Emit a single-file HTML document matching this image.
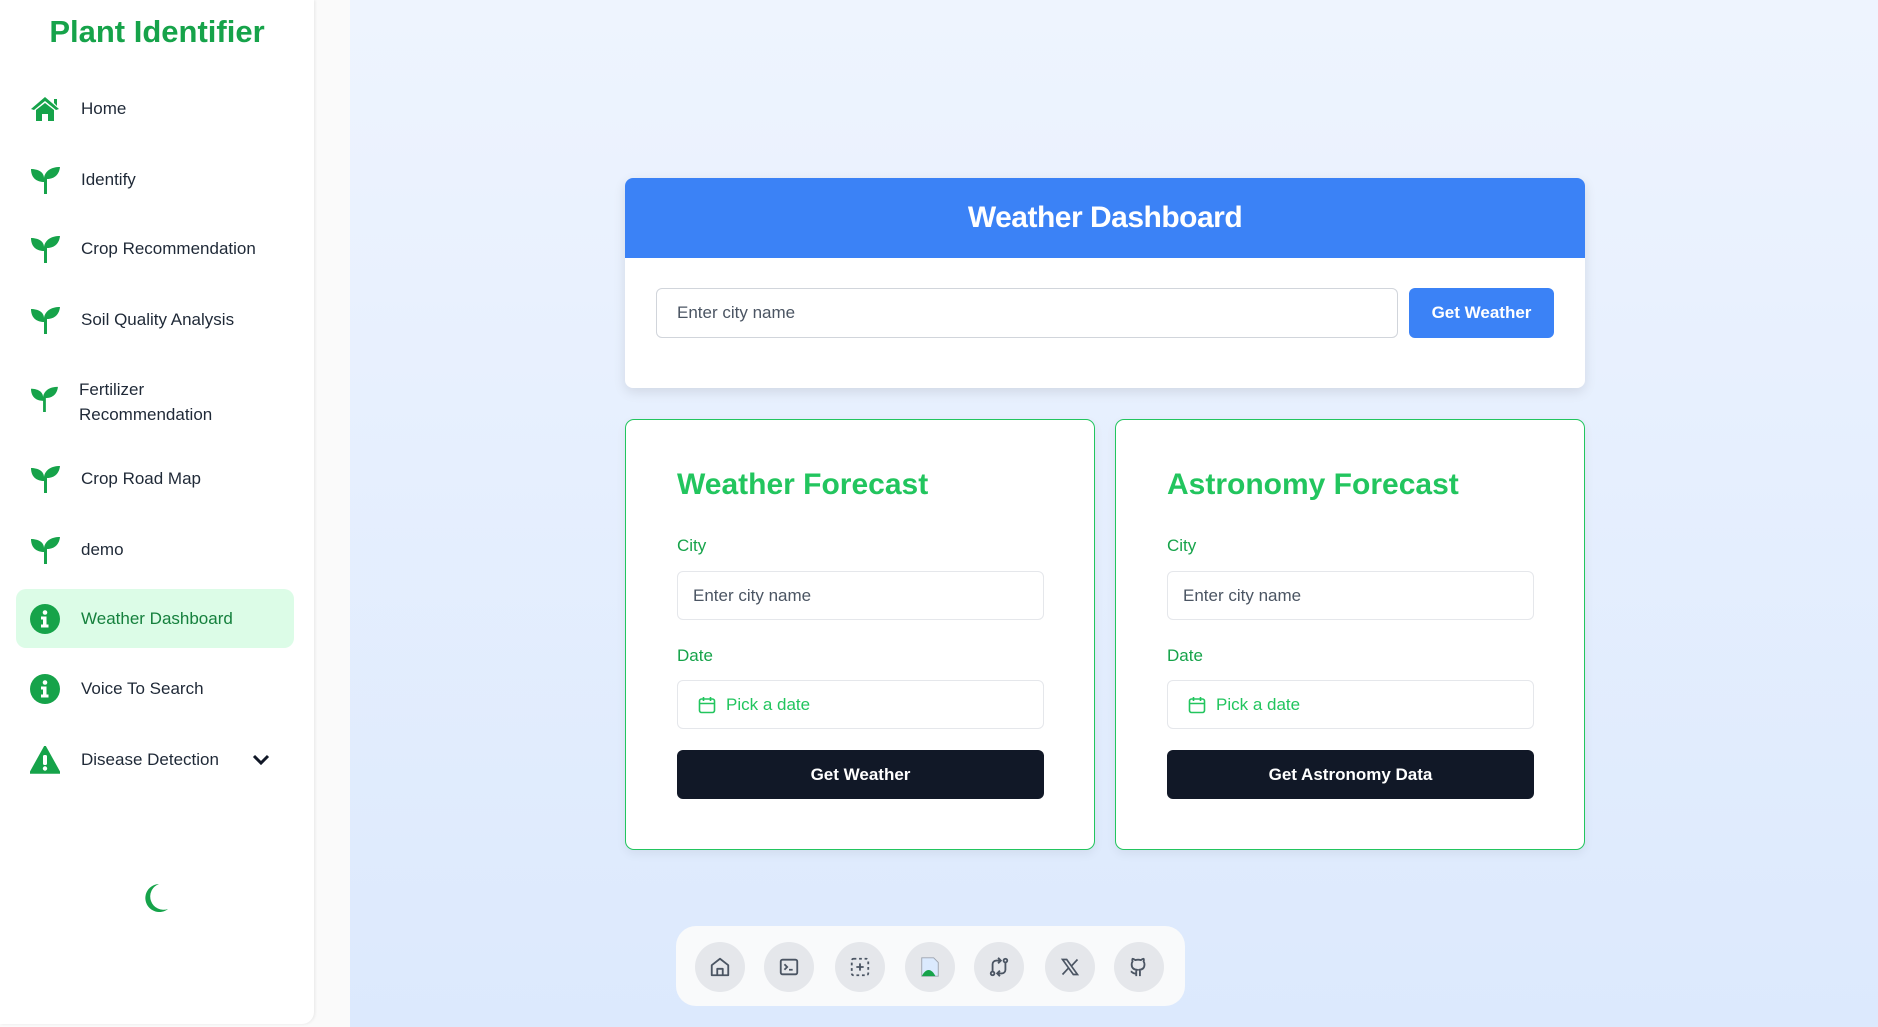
<!DOCTYPE html>
<html><head><meta charset="utf-8"><style>
*{box-sizing:border-box;margin:0;padding:0}
body{width:1878px;height:1027px;overflow:hidden;font-family:"Liberation Sans",sans-serif;background:linear-gradient(180deg,#eef4fe 0%,#dce9fd 100%);position:relative}
.gap{position:absolute;left:0;top:0;width:350px;height:1027px;background:#fafafa}
.side{position:absolute;left:0;top:0;width:314px;height:1024px;background:#fff;border-radius:0 0 12px 0;box-shadow:1px 0 3px rgba(0,0,0,.08)}
.title{position:absolute;left:0;width:314px;top:14px;text-align:center;font-size:31px;font-weight:bold;color:#16a34a}
.nav{position:absolute;left:30px;font-size:17px;color:#1f2937;display:flex;align-items:center}
.nav svg{position:absolute;left:0}
.nav span{position:absolute;left:51px;white-space:nowrap}
.active{position:absolute;left:16px;top:589px;width:278px;height:59px;background:#dcfce7;border-radius:10px}
.abs{position:absolute}
.card{position:absolute;background:#fff;border-radius:8px;box-shadow:0 4px 12px rgba(0,0,0,.1)}
.inp{position:absolute;border:1px solid #d1d5db;border-radius:6px;background:#fff;font-size:17px;color:#4b5563;display:flex;align-items:center;padding-left:20px}
.fc{position:absolute;top:419px;width:470px;height:431px;background:#fff;border:1.5px solid #22c55e;border-radius:9px;box-shadow:0 4px 10px rgba(0,0,0,.06)}
.fc h2{position:absolute;left:51px;top:48px;font-size:30px;font-weight:600;color:#22c55e}
.lbl{position:absolute;left:51px;font-size:17px;color:#16a34a;font-weight:500}
.fi{position:absolute;left:51px;width:367px;height:49px;border:1px solid #e5e7eb;border-radius:6px;font-size:17px;display:flex;align-items:center;padding-left:15px;color:#4b5563}
.btn{position:absolute;left:51px;top:330px;width:367px;height:49px;background:#111827;border-radius:6px;color:#fff;font-size:17px;font-weight:bold;display:flex;align-items:center;justify-content:center}
.dock{position:absolute;left:676px;top:926px;width:509px;height:80px;background:#f9fafb;border-radius:20px}
.c{position:absolute;top:16px;width:50px;height:50px;border-radius:50%;background:#e5e7eb;display:flex;align-items:center;justify-content:center}
</style></head><body>
<div class="gap"></div>
<div class="side">
<div class="title">Plant Identifier</div>
<div class="active"></div>
<div class="nav" style="top:109px"><svg width="30" height="26" viewBox="0 0 30 26" style="top:-13px"><path d="M15 1 L1 13 L4 14 L15 5 L26 14 L29 13 Z M24 3 h3 v7 l-3 -3z" fill="#16a34a"/><path d="M6 14 L15 7 L24 14 V25 H18 V18 H12 V25 H6 Z" fill="#16a34a"/></svg><span style="top:-10px">Home</span></div>
<div class="nav" style="top:180px"><svg width="30" height="28" viewBox="0 0 30 28" style="top:-14px"><path d="M14 28 V16 C8 16 1 13 1 3 C8 3 14 6 14 12 C15 5 21 1 30 1 C29 10 23 13 17 13 V28Z" fill="#16a34a"/></svg><span style="top:-10px">Identify</span></div>
<div class="nav" style="top:249px"><svg width="30" height="28" viewBox="0 0 30 28" style="top:-14px"><path d="M14 28 V16 C8 16 1 13 1 3 C8 3 14 6 14 12 C15 5 21 1 30 1 C29 10 23 13 17 13 V28Z" fill="#16a34a"/></svg><span style="top:-10px">Crop Recommendation</span></div>
<div class="nav" style="top:320px"><svg width="30" height="28" viewBox="0 0 30 28" style="top:-14px"><path d="M14 28 V16 C8 16 1 13 1 3 C8 3 14 6 14 12 C15 5 21 1 30 1 C29 10 23 13 17 13 V28Z" fill="#16a34a"/></svg><span style="top:-10px">Soil Quality Analysis</span></div>
<div class="nav" style="top:399px"><svg width="28" height="26" viewBox="0 0 30 28" style="top:-13px"><path d="M14 28 V16 C8 16 1 13 1 3 C8 3 14 6 14 12 C15 5 21 1 30 1 C29 10 23 13 17 13 V28Z" fill="#16a34a"/></svg><span style="top:-22px;left:49px;line-height:25px">Fertilizer<br>Recommendation</span></div>
<div class="nav" style="top:479px"><svg width="30" height="28" viewBox="0 0 30 28" style="top:-14px"><path d="M14 28 V16 C8 16 1 13 1 3 C8 3 14 6 14 12 C15 5 21 1 30 1 C29 10 23 13 17 13 V28Z" fill="#16a34a"/></svg><span style="top:-10px">Crop Road Map</span></div>
<div class="nav" style="top:550px"><svg width="30" height="28" viewBox="0 0 30 28" style="top:-14px"><path d="M14 28 V16 C8 16 1 13 1 3 C8 3 14 6 14 12 C15 5 21 1 30 1 C29 10 23 13 17 13 V28Z" fill="#16a34a"/></svg><span style="top:-10px">demo</span></div>
<div class="nav" style="top:619px"><svg width="30" height="30" viewBox="0 0 30 30" style="top:-15px"><circle cx="15" cy="15" r="15" fill="#16a34a"/><circle cx="15" cy="8.5" r="2.3" fill="#fff"/><path d="M11 12.5h5.5v8h2v3h-7.5v-3h2v-5h-2z" fill="#fff"/></svg><span style="top:-10px;color:#15803d">Weather Dashboard</span></div>
<div class="nav" style="top:689px"><svg width="30" height="30" viewBox="0 0 30 30" style="top:-15px"><circle cx="15" cy="15" r="15" fill="#16a34a"/><circle cx="15" cy="8.5" r="2.3" fill="#fff"/><path d="M11 12.5h5.5v8h2v3h-7.5v-3h2v-5h-2z" fill="#fff"/></svg><span style="top:-10px">Voice To Search</span></div>
<div class="nav" style="top:760px"><svg width="30" height="28" viewBox="0 0 30 28" style="top:-14px"><path d="M15 0 L30 27 H0 Z" fill="#16a34a" stroke="#16a34a" stroke-linejoin="round" stroke-width="1.5"/><rect x="13" y="9" width="4" height="10" rx="1.5" fill="#fff"/><circle cx="15" cy="22.5" r="2.2" fill="#fff"/></svg><span style="top:-10px">Disease Detection</span></div>
<svg class="abs" style="left:252px;top:754px" width="18" height="12" viewBox="0 0 18 12"><path d="M2 2 L9 9 L16 2" stroke="#111827" stroke-width="3" fill="none"/></svg>
<svg class="abs" style="left:141px;top:883px" width="30" height="30" viewBox="0 0 30 30"><path d="M18 1 A14 14 0 1 0 27 26 A11 11 0 0 1 18 1Z" fill="#16a34a"/></svg>
</div>

<div class="card" style="left:625px;top:178px;width:960px;height:210px">
<div class="abs" style="left:0;top:0;width:960px;height:80px;background:#3b82f6;border-radius:8px 8px 0 0;color:#fff;font-size:30px;font-weight:bold;display:flex;align-items:center;justify-content:center;letter-spacing:-.5px">Weather Dashboard</div>
<div class="inp" style="left:31px;top:110px;width:742px;height:50px">Enter city name</div>
<div class="abs" style="left:784px;top:110px;width:145px;height:50px;background:#3b82f6;border-radius:6px;color:#fff;font-size:17px;font-weight:bold;display:flex;align-items:center;justify-content:center">Get Weather</div>
</div>

<div class="fc" style="left:625px">
<h2>Weather Forecast</h2>
<div class="lbl" style="top:116px">City</div>
<div class="fi" style="top:151px;padding-left:15px">Enter city name</div>
<div class="lbl" style="top:226px">Date</div>
<div class="fi" style="top:260px;color:#22c55e;padding-left:20px"><svg width="18" height="18" viewBox="0 0 18 18" style="margin-right:10px"><rect x="1.5" y="3" width="15" height="13.5" rx="2" stroke="#22c55e" stroke-width="1.6" fill="none"/><path d="M1.5 7.5h15M5.5 1v4M12.5 1v4" stroke="#22c55e" stroke-width="1.6"/></svg>Pick a date</div>
<div class="btn">Get Weather</div>
</div>
<div class="fc" style="left:1115px">
<h2>Astronomy Forecast</h2>
<div class="lbl" style="top:116px">City</div>
<div class="fi" style="top:151px">Enter city name</div>
<div class="lbl" style="top:226px">Date</div>
<div class="fi" style="top:260px;color:#22c55e;padding-left:20px"><svg width="18" height="18" viewBox="0 0 18 18" style="margin-right:10px"><rect x="1.5" y="3" width="15" height="13.5" rx="2" stroke="#22c55e" stroke-width="1.6" fill="none"/><path d="M1.5 7.5h15M5.5 1v4M12.5 1v4" stroke="#22c55e" stroke-width="1.6"/></svg>Pick a date</div>
<div class="btn">Get Astronomy Data</div>
</div>

<div class="dock">
<div class="c" style="left:19px"><svg width="22" height="22" viewBox="0 0 24 24" fill="none" stroke="#4b5563" stroke-width="2" stroke-linejoin="round"><path d="M3 10 L12 3 L21 10 V21 H3 Z"/><path d="M9 21 V14 H15 V21"/></svg></div>
<div class="c" style="left:88px"><svg width="22" height="22" viewBox="0 0 24 24" fill="none" stroke="#4b5563" stroke-width="2"><rect x="3" y="4" width="18" height="16" rx="2"/><path d="M7 9l3 3-3 3M12 15h4"/></svg></div>
<div class="c" style="left:159px"><svg width="22" height="22" viewBox="0 0 24 24" fill="none" stroke="#4b5563" stroke-width="2" stroke-dasharray="3 3"><rect x="3" y="3" width="18" height="18" rx="2"/><path d="M12 8v8M8 12h8" stroke-dasharray="none"/></svg></div>
<div class="c" style="left:229px"><svg width="22" height="22" viewBox="0 0 24 24"><path d="M3 2h13l5 5v15H3z" fill="#dbeafe" stroke="#9ca3af"/><path d="M3 22 C8 12 14 14 18 22Z" fill="#16a34a"/></svg></div>
<div class="c" style="left:298px"><svg width="22" height="22" viewBox="0 0 24 24" fill="none" stroke="#4b5563" stroke-width="2"><circle cx="5" cy="19" r="2"/><circle cx="19" cy="5" r="2"/><path d="M5 17V9a4 4 0 0 1 4-4h4M11 2l3 3-3 3M19 7v8a4 4 0 0 1-4 4h-4M13 22l-3-3 3-3"/></svg></div>
<div class="c" style="left:369px"><svg width="20" height="20" viewBox="0 0 24 24" fill="none" stroke="#4b5563" stroke-width="2"><path d="M3 3h5l13 18h-5zM3 21l7.5-8M13.5 11 21 3"/></svg></div>
<div class="c" style="left:438px"><svg width="22" height="22" viewBox="0 0 24 24" fill="none" stroke="#4b5563" stroke-width="2" stroke-linejoin="round"><path d="M9 22v-4a3 3 0 0 1 1-3c-3 0-6-1-6-6a5 5 0 0 1 1-3 4 4 0 0 1 0-3s1 0 3 1.5a10 10 0 0 1 6 0C16 3 17 3 17 3a4 4 0 0 1 0 3 5 5 0 0 1 1 3c0 5-3 6-6 6a3 3 0 0 1 1 3v4M9 19c-4 1-4-2-6-2"/></svg></div>
</div>
</body></html>
